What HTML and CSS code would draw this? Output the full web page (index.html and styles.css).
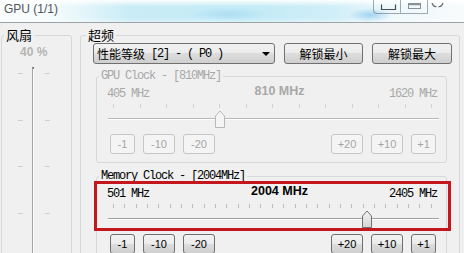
FILE: index.html
```html
<!DOCTYPE html>
<html>
<head>
<meta charset="utf-8">
<link rel="stylesheet" href="styles.css">
</head>
<body>
<div class="window">
  <header class="titlebar">
    <span class="title">GPU (1/1)</span>
    <div class="caption-btns">
      <span class="cbtn min"><svg width="27" height="13" viewBox="0 0 27 13"><path d="M7.5 4.5 V9.5 H21.5 V4.5" fill="none" stroke="#4a4f55" stroke-width="1.2"/></svg></span>
      <span class="cbtn max"><svg width="27" height="13" viewBox="0 0 27 13"><rect x="7.5" y="3.5" width="12" height="5" fill="none" stroke="#8a9098" stroke-width="1"/><path d="M7.5 4.5 H19.5" stroke="#8a9098" stroke-width="1.5"/></svg></span>
      <span class="cbtn close"><svg width="32" height="13" viewBox="0 0 32 13"><path d="M4 3 Q5.5 7.5 8.5 6.5 M15 3 Q13.5 7.5 10.5 6.5" fill="none" stroke="#6a6f75" stroke-width="1.2"/></svg></span>
    </div>
  </header>
  <main class="content">
    <fieldset class="group fan">
      <legend>风扇</legend>
      <div class="fan-value">40 %</div>
      <div class="vslider">
        <div class="vticks"><i></i><i></i><i></i><i></i></div>
        <div class="vtrack"></div>
        <div class="vticks"><i></i><i></i><i></i><i></i></div>
      </div>
    </fieldset>
    <fieldset class="group oc">
      <legend>超频</legend>
      <div class="oc-body">
        <div class="toolbar">
          <div class="select">性能等级<span class="mono"> [2] - ( P0 )</span><span class="arrow"></span></div>
          <button class="btn unlock-min">解锁最小</button>
          <button class="btn unlock-max">解锁最大</button>
        </div>
        <fieldset class="clock disabled">
          <legend>GPU Clock - [810MHz]</legend>
          <div class="clock-body">
            <div class="scale"><span>405 MHz</span><b>810 MHz</b><span class="max">1620 MHz</span></div>
            <div class="slider">
              <div class="ticks"><i></i><i></i><i></i><i></i><i></i><i></i><i></i><i></i><i></i><i></i><i></i><i></i><i></i></div>
              <div class="track"></div>
              <svg class="thumb" style="left:107px" width="10" height="18" viewBox="0 0 10 18"><path d="M0.5 17.5 V6 L5 1 L9.5 6 V17.5 Z" fill="#f4f4f4" stroke="#b8b8b8" stroke-linejoin="round"/></svg>
            </div>
            <div class="steps">
              <div class="step-group"><button class="step narrow">-1</button><button class="step">-10</button><button class="step">-20</button></div>
              <div class="step-group"><button class="step">+20</button><button class="step">+10</button><button class="step narrow">+1</button></div>
            </div>
          </div>
        </fieldset>
        <fieldset class="clock mem">
          <legend>Memory Clock - [2004MHz]</legend>
          <div class="clock-body">
            <div class="scale"><span>501 MHz</span><b>2004 MHz</b><span class="max">2405 MHz</span></div>
            <div class="slider">
              <div class="ticks"><i></i><i></i><i></i><i></i><i></i><i></i><i></i><i></i><i></i><i></i><i></i><i></i><i></i><i></i><i></i><i></i><i></i><i></i><i></i><i></i><i></i><i></i><i></i><i></i><i></i><i></i><i></i><i></i><i></i></div>
              <div class="track"></div>
              <svg class="thumb" style="left:254px" width="10" height="18" viewBox="0 0 10 18"><defs><linearGradient id="tg" x1="0" y1="0" x2="0" y2="1"><stop offset="0" stop-color="#f4f4f4"/><stop offset="1" stop-color="#d4d4d4"/></linearGradient></defs><path d="M0.5 17.5 V6 L5 1 L9.5 6 V17.5 Z" fill="url(#tg)" stroke="#707070" stroke-linejoin="round"/></svg>
            </div>
            <div class="steps">
              <div class="step-group"><button class="step narrow">-1</button><button class="step">-10</button><button class="step">-20</button></div>
              <div class="step-group"><button class="step">+20</button><button class="step">+10</button><button class="step narrow">+1</button></div>
            </div>
          </div>
        </fieldset>
      </div>
    </fieldset>
  </main>
  <div class="highlight"></div>
</div>
</body>
</html>
```

FILE: styles.css
```css
* { box-sizing: border-box; }
html, body { margin: 0; padding: 0; }
body {
  background: #f0f0f0;
  font-family: "Liberation Sans", Arial, sans-serif;
}
.window {
  position: relative;
  width: 464px;
  height: 253px;
  overflow: hidden;
  background: #f0f0f0;
}

/* title bar */
.titlebar {
  display: flex;
  justify-content: space-between;
  align-items: flex-start;
  height: 23px;
  border-bottom: 1px solid #9ca2a6;
  background:
    radial-gradient(ellipse 22px 7px at 370px 15px, rgba(110, 185, 235, 0.55), rgba(110, 185, 235, 0)),
    radial-gradient(ellipse 40px 7px at 228px 14px, rgba(150, 210, 240, 0.5), rgba(150, 210, 240, 0)),
    linear-gradient(to bottom, rgba(255,255,255,0.95) 0, rgba(255,255,255,0) 30%, rgba(255,255,255,0) 80%, rgba(255,255,255,0.35) 100%),
    linear-gradient(to right, #fbfdfd 0, #f4fbfc 12%, #c9ecf6 28%, #c4ebf6 55%, #d0eef8 72%, #eef8fb 84%, #f8fbfc 100%);
}
.title {
  padding: 2px 0 0 4px;
  font-size: 12px;
  line-height: 14px;
  color: #50565a;
}
.caption-btns {
  display: flex;
  margin-right: 4px;
}
.cbtn {
  display: block;
  height: 14px;
  border: 1px solid rgba(70, 90, 110, 0.5);
  border-top: 0;
}
.cbtn svg { display: block; }
.cbtn.min { width: 28px; border-radius: 0 0 0 4px; }
.cbtn.max { width: 27px; border-left: 0; }
.cbtn.close { width: 32px; border: 0; }

/* content */
.content {
  display: flex;
  align-items: flex-start;
  gap: 8px;
  padding: 4px 0 0 1px;
}
.group {
  margin: 0;
  padding: 0;
  min-width: 0;
  border: 1px solid #d3d8dc;
  border-radius: 3px;
}
.group > legend {
  padding: 0 2px;
  font: 13px/16px "Noto Sans CJK SC", sans-serif;
  color: #000;
}
.fan { width: 71px; height: 250px; }
.fan > legend { margin-left: 2px; }
.oc { width: 380px; height: 250px; }
.oc > legend { margin-left: 5px; }

/* fan */
.fan-value {
  padding: 2px 0 0 18px;
  font: bold 12px/14px "Liberation Sans", Arial, sans-serif;
  color: #b4b4b4;
}
.vslider {
  display: flex;
  height: 200px;
  margin-top: 8px;
  padding-left: 16px;
}
.vticks {
  display: flex;
  flex-direction: column;
  gap: 45.5px;
  width: 5px;
  padding-top: 6px;
}
.vticks i {
  display: block;
  height: 1px;
  background: #cfcfcf;
}
.vtrack {
  width: 2px;
  margin: 0 11px 0 9px;
  border-left: 1px solid #a4a4a4;
  border-top: 2px solid #7a7a7a;
  background: #fff;
}

/* overclock */
.oc-body { padding: 0 0 0 12px; }
.toolbar {
  display: flex;
  gap: 9px;
  height: 21px;
}
.select {
  display: flex;
  align-items: center;
  width: 182px;
  height: 21px;
  padding-left: 3px;
  font: 12px/14px "Noto Sans CJK SC", sans-serif;
  color: #000;
  border: 1px solid #707070;
  border-radius: 3px;
  background: linear-gradient(#f2f2f2, #ebebeb 50%, #dddddd 50%, #cfcfcf);
}
.mono {
  font: 12px/14px "Liberation Mono", monospace;
  letter-spacing: -1.2px;
  white-space: pre;
}
.arrow {
  margin-left: auto;
  margin-right: 4px;
  width: 0;
  height: 0;
  border-left: 4px solid transparent;
  border-right: 4px solid transparent;
  border-top: 4px solid #000;
}
.btn {
  height: 21px;
  padding: 0;
  font: 12px "Noto Sans CJK SC", sans-serif;
  color: #000;
  border: 1px solid #707070;
  border-radius: 3px;
  background: linear-gradient(#f2f2f2, #ebebeb 50%, #dddddd 50%, #cfcfcf);
}
.unlock-min { width: 79px; }
.unlock-max { width: 80px; }

/* clock groups */
.clock {
  width: 351px;
  margin: 6px 0 0 3px;
  padding: 0;
  min-width: 0;
  border: 1px solid #d3d8dc;
  border-radius: 3px;
}
.clock.mem { margin-top: 7px; }
.clock > legend {
  margin-left: 2px;
  padding: 0 2px;
  font: 12px/12px "Liberation Mono", monospace;
  letter-spacing: -1.2px;
  color: #000;
}
.clock.disabled > legend { color: #a8a8a8; }
.clock-body { padding: 5px 9px 8px 10px; }
.scale {
  display: grid;
  grid-template-columns: 1fr auto 1fr;
  align-items: start;
  font: 12px/14px "Liberation Mono", monospace;
  letter-spacing: -1.2px;
  color: #000;
}
.scale b {
  margin-top: -3px;
  padding-left: 15px;
  font: bold 12.5px/14px "Liberation Sans", Arial, sans-serif;
  letter-spacing: 0;
}
.scale .max { text-align: right; }
.disabled .scale { color: #a8a8a8; }

.slider {
  position: relative;
  height: 24px;
  margin: 3px -2px 0 1px;
}
.ticks {
  display: flex;
  justify-content: space-between;
  height: 4px;
  margin: 0 7px 0 5px;
}
.ticks i {
  display: block;
  width: 1px;
  background: #bcbcbc;
}
.disabled .ticks i { background: #d2d2d2; }
.track {
  height: 2px;
  margin-top: 10px;
  border-top: 1px solid #a0a0a0;
  background: #fff;
}
.disabled .track { border-top-color: #b8b8b8; }
.thumb {
  position: absolute;
  top: 6px;
  display: block;
}

.steps {
  display: flex;
  justify-content: space-between;
  margin-top: 6px;
  padding: 0 1px 0 3px;
}
.step-group {
  display: flex;
  gap: 8px;
}
.step {
  width: 32px;
  height: 20px;
  padding: 0;
  font: 11px "Liberation Sans", Arial, sans-serif;
  color: #000;
  border: 1px solid #707070;
  border-radius: 3px;
  background: linear-gradient(#f2f2f2, #ebebeb 50%, #dddddd 50%, #cfcfcf);
}
.step.narrow { width: 25px; }
.disabled .step {
  color: #a4a4a4;
  border-color: #c6c6c6;
  background: #f4f4f4;
}

/* annotation */
.highlight {
  position: absolute;
  left: 94px;
  top: 181px;
  width: 357px;
  height: 50px;
  border: 3px solid #c5161d;
}
```
